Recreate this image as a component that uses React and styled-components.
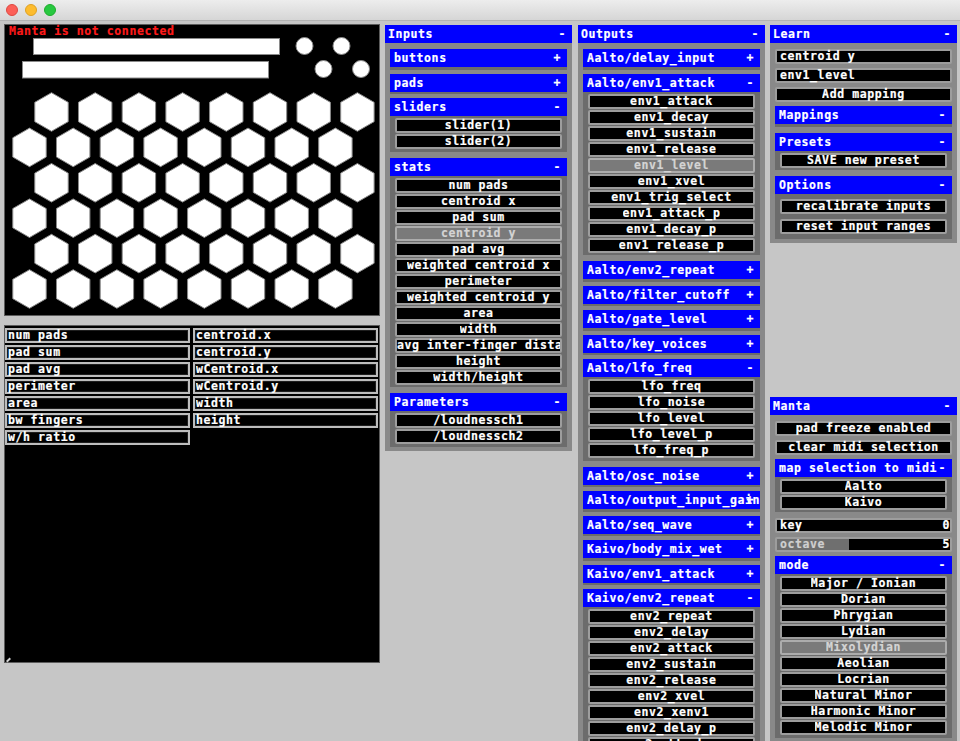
import React from 'react';
import styled, { createGlobalStyle } from 'styled-components';

const GlobalStyle = createGlobalStyle`
  html, body { margin: 0; padding: 0; background: #c6c6c6; overflow: hidden; }
  body { font-family: "DejaVu Sans Mono", "Liberation Mono", monospace; }
  #root { width: 960px; height: 741px; overflow: hidden; }
`;

const FONT = `font-family: "DejaVu Sans Mono", "Liberation Mono", monospace; font-weight: bold; font-size: 11.5px; letter-spacing: 0.6px; -webkit-text-stroke: 0.2px currentColor;`;

const Window = styled.div`
  width: 960px;
  height: 741px;
  display: flex;
  flex-direction: column;
  background: #c6c6c6;
  overflow: hidden;
`;

const TitleBar = styled.div`
  flex: none;
  height: 20px;
  background: linear-gradient(#ededed, #d6d6d6);
  border-bottom: 1px solid #b3b3b3;
  display: flex;
  align-items: center;
  gap: 7px;
  padding-left: 6px;
`;

const Light = styled.span`
  width: 12px;
  height: 12px;
  border-radius: 50%;
  box-sizing: border-box;
  background: ${(p) => p.$c};
  border: 0.5px solid ${(p) => p.$b};
`;

const Main = styled.div`
  flex: 1;
  display: flex;
  align-items: flex-start;
  gap: 5px;
  padding: 3px 0 0 4px;
  min-height: 0;
`;

const LeftCol = styled.div`
  width: 376px;
  flex: none;
  display: flex;
  flex-direction: column;
  gap: 9px;
`;

const MantaBox = styled.div`
  position: relative;
  height: 292px;
  box-sizing: border-box;
  background: #000;
  border: 1px solid #5c5c5c;
`;

const Status = styled.span`
  position: absolute;
  left: 4px;
  top: 0px;
  ${FONT}
  line-height: 13px;
  color: #ff1a1a;
`;

const StatsBox = styled.div`
  position: relative;
  height: 338px;
  box-sizing: border-box;
  background: #000;
  border: 1px solid #5c5c5c;
  display: grid;
  grid-template-columns: 185px 185px;
  grid-auto-rows: 15px;
  column-gap: 3px;
  row-gap: 2px;
  align-content: start;
  padding-top: 1.5px;
`;

const ResizeMark = styled.span`
  position: absolute;
  left: 1px;
  bottom: 1px;
  width: 5px;
  height: 2px;
  background: #d0d0d0;
  transform: rotate(-45deg);
`;

const StatCell = styled.div`
  box-sizing: border-box;
  border: 2px solid #bdbdbd;
  box-shadow: inset 0 0 0 1px #1e1e1e;
  background: #000;
  color: #fff;
  ${FONT}
  padding-left: 1px;
  white-space: nowrap;
`;

const Label = styled.span`
  display: block;
  height: 15px;
  margin: -2px 0;
  min-width: 0;
  max-width: 100%;
  line-height: 15px;
  overflow: hidden;
  white-space: nowrap;
`;

const Column = styled.div`
  width: 187px;
  flex: none;
  display: flex;
  flex-direction: column;
  margin-left: ${(p) => p.$shift || 0}px;
`;

const Panel = styled.div`
  background: #898989;
  margin-top: ${(p) => p.$top || 1}px;
  display: flex;
  flex-direction: column;
`;

const Header = styled.div`
  height: 18px;
  flex: none;
  background: #0000ff;
  color: #fff;
  ${FONT}
  line-height: 18px;
  display: grid;
  align-items: center;
  padding-left: ${(p) => (p.$sub ? 4 : 3)}px;
  overflow: hidden;
  & > * { grid-area: 1 / 1; white-space: nowrap; }
`;

const HeaderLabel = styled.span`
  overflow: hidden;
`;

const HeaderSign = styled.span`
  justify-self: end;
  margin-right: 6px;
`;

const PanelBody = styled.div`
  display: flex;
  flex-direction: column;
  padding: 6px 5px 4.5px;
`;

const SubPanel = styled.div`
  background: #6c6c6c;
  padding-bottom: 2.5px;
  margin-bottom: ${(p) => (p.$open ? 6 : 4)}px;
  &:last-child { margin-bottom: 0; }
`;

const SubBody = styled.div`
  display: flex;
  flex-direction: column;
  gap: ${(p) => (p.$loose ? 4.5 : 1)}px;
  padding: ${(p) => (p.$loose ? '5px 5px 2.5px' : '2px 5px 0')};
`;

const Item = styled.div`
  height: 15px;
  flex: none;
  box-sizing: border-box;
  border: 2px solid ${(p) => (p.$on ? '#acacac' : '#9d9d9d')};
  border-radius: 2px;
  background: ${(p) => (p.$on ? '#7a7a7a' : '#000')};
  color: ${(p) => (p.$on ? '#d4d4d4' : '#fff')};
  ${FONT}
  display: flex;
  justify-content: ${(p) => (p.$left ? 'flex-start' : 'safe center')};
  padding-left: ${(p) => (p.$left ? 3 : 0)}px;
  white-space: nowrap;
  margin-bottom: ${(p) => (p.$spaced ? 4 : 0)}px;
`;

const Slider = styled.div`
  position: relative;
  height: 15px;
  box-sizing: border-box;
  border: 2px solid #9d9d9d;
  border-radius: 2px;
  background: #000;
  margin-bottom: 4px;
`;

const SliderFill = styled.div`
  position: absolute;
  left: 0;
  top: 0;
  bottom: 0;
  background: #6f6f6f;
`;

const SliderText = styled.div`
  position: relative;
  display: flex;
  justify-content: space-between;
  height: 15px;
  margin: -2px 0;
  padding: 0 0 0 3px;
  ${FONT}
  line-height: 15px;
  color: #fff;
`;

const SliderName = styled.span`
  color: ${(p) => (p.$dim ? '#cfcfcf' : '#fff')};
`;

function PanelHead({ title, sign, sub }) {
  return (
    <Header $sub={sub}>
      <HeaderLabel>{title}</HeaderLabel>
      <HeaderSign>{sign}</HeaderSign>
    </Header>
  );
}

function Sub({ title, items, loose, open }) {
  const isOpen = open ?? !!items;
  return (
    <SubPanel $open={isOpen}>
      <PanelHead sub title={title} sign={isOpen ? '-' : '+'} />
      {items && items.length > 0 && (
        <SubBody $loose={loose}>
          {items.map((it) => {
            const [label, on] = Array.isArray(it) ? it : [it, false];
            return (
              <Item key={label} $on={on}>
                <Label>{label}</Label>
              </Item>
            );
          })}
        </SubBody>
      )}
    </SubPanel>
  );
}

function Hex({ cx, cy, r }) {
  const pts = [];
  for (let i = 0; i < 6; i++) {
    const a = ((-90 + 60 * i) * Math.PI) / 180;
    pts.push(`${(cx + r * Math.cos(a)).toFixed(2)},${(cy + r * Math.sin(a)).toFixed(2)}`);
  }
  return <polygon points={pts.join(' ')} fill="#fff" stroke="#8a8a8a" strokeWidth="1" />;
}

function MantaDrawing() {
  const hexes = [];
  for (let row = 0; row < 6; row++) {
    const offset = row % 2 === 0;
    const y = 87 + 35.4 * row;
    for (let c = 0; c < 8; c++) {
      const x = (offset ? 46.5 : 24.5) + 43.7 * c;
      hexes.push(<Hex key={`${row}-${c}`} cx={x} cy={y} r={19.3} />);
    }
  }
  return (
    <svg width="374" height="290" viewBox="0 0 374 290" style={{ display: 'block' }}>
      <rect x="28.5" y="13.5" width="246" height="16" fill="#fff" stroke="#8a8a8a" />
      <rect x="17.5" y="36.5" width="246" height="16.5" fill="#fff" stroke="#8a8a8a" />
      <circle cx="299.5" cy="21" r="8.5" fill="#fff" stroke="#8a8a8a" />
      <circle cx="336.5" cy="21" r="8.5" fill="#fff" stroke="#8a8a8a" />
      <circle cx="318.5" cy="44" r="8.5" fill="#fff" stroke="#8a8a8a" />
      <circle cx="356" cy="44" r="8.5" fill="#fff" stroke="#8a8a8a" />
      {hexes}
    </svg>
  );
}

const statRows = [
  ['num pads', 'centroid.x'],
  ['pad sum', 'centroid.y'],
  ['pad avg', 'wCentroid.x'],
  ['perimeter', 'wCentroid.y'],
  ['area', 'width'],
  ['bw fingers', 'height'],
  ['w/h ratio', null],
];

const modes = [
  'Major / Ionian',
  'Dorian',
  'Phrygian',
  'Lydian',
  ['Mixolydian', true],
  'Aeolian',
  'Locrian',
  'Natural Minor',
  'Harmonic Minor',
  'Melodic Minor',
];

export default function App() {
  return (
    <Window>
      <GlobalStyle />
      <TitleBar>
        <Light $c="#fc5f57" $b="#de4841" />
        <Light $c="#fdbc2e" $b="#dea123" />
        <Light $c="#28c840" $b="#1dad2b" />
      </TitleBar>
      <Main>
        <LeftCol>
          <MantaBox>
            <MantaDrawing />
            <Status>Manta is not connected</Status>
          </MantaBox>
          <StatsBox>
            {statRows.flatMap(([a, b]) => [
              <StatCell key={a}>
                <Label>{a}</Label>
              </StatCell>,
              b ? (
                <StatCell key={b}>
                  <Label>{b}</Label>
                </StatCell>
              ) : null,
            ])}
            <ResizeMark />
          </StatsBox>
        </LeftCol>

        <Column>
          <Panel>
            <PanelHead title="Inputs" sign="-" />
            <PanelBody>
              <Sub title="buttons" />
              <Sub title="pads" />
              <Sub title="sliders" items={['slider(1)', 'slider(2)']} />
              <Sub
                title="stats"
                items={[
                  'num pads',
                  'centroid x',
                  'pad sum',
                  ['centroid y', true],
                  'pad avg',
                  'weighted centroid x',
                  'perimeter',
                  'weighted centroid y',
                  'area',
                  'width',
                  'avg inter-finger distance',
                  'height',
                  'width/height',
                ]}
              />
              <Sub title="Parameters" items={['/loudnessch1', '/loudnessch2']} />
            </PanelBody>
          </Panel>
        </Column>

        <Column $shift={1}>
          <Panel>
            <PanelHead title="Outputs" sign="-" />
            <PanelBody>
              <Sub title="Aalto/delay_input" />
              <Sub
                title="Aalto/env1_attack"
                items={[
                  'env1_attack',
                  'env1_decay',
                  'env1_sustain',
                  'env1_release',
                  ['env1_level', true],
                  'env1_xvel',
                  'env1_trig_select',
                  'env1_attack_p',
                  'env1_decay_p',
                  'env1_release_p',
                ]}
              />
              <Sub title="Aalto/env2_repeat" />
              <Sub title="Aalto/filter_cutoff" />
              <Sub title="Aalto/gate_level" />
              <Sub title="Aalto/key_voices" />
              <Sub
                title="Aalto/lfo_freq"
                items={['lfo_freq', 'lfo_noise', 'lfo_level', 'lfo_level_p', 'lfo_freq_p']}
              />
              <Sub title="Aalto/osc_noise" />
              <Sub title="Aalto/output_input_gain" />
              <Sub title="Aalto/seq_wave" />
              <Sub title="Kaivo/body_mix_wet" />
              <Sub title="Kaivo/env1_attack" />
              <Sub
                title="Kaivo/env2_repeat"
                items={[
                  'env2_repeat',
                  'env2_delay',
                  'env2_attack',
                  'env2_sustain',
                  'env2_release',
                  'env2_xvel',
                  'env2_xenv1',
                  'env2_delay_p',
                  'env2_attack_p',
                  'env2_release_p',
                ]}
              />
            </PanelBody>
          </Panel>
        </Column>

        <Column>
          <Panel>
            <PanelHead title="Learn" sign="-" />
            <PanelBody>
              <Item $left $spaced>
                <Label>centroid y</Label>
              </Item>
              <Item $left $spaced>
                <Label>env1_level</Label>
              </Item>
              <Item $spaced>
                <Label>Add mapping</Label>
              </Item>
              <Sub title="Mappings" open />
              <Sub title="Presets" items={['SAVE new preset']} />
              <Sub title="Options" loose items={['recalibrate inputs', 'reset input ranges']} />
            </PanelBody>
          </Panel>

          <Panel $top={153.5}>
            <PanelHead title="Manta" sign="-" />
            <PanelBody>
              <Item $spaced>
                <Label>pad freeze enabled</Label>
              </Item>
              <Item $spaced>
                <Label>clear midi selection</Label>
              </Item>
              <Sub title="map selection to midi" items={['Aalto', 'Kaivo']} />
              <Slider>
                <SliderText>
                  <SliderName>key</SliderName>
                  <span>0</span>
                </SliderText>
              </Slider>
              <Slider>
                <SliderFill style={{ width: `${(5 / 12) * 100}%` }} />
                <SliderText>
                  <SliderName $dim>octave</SliderName>
                  <span>5</span>
                </SliderText>
              </Slider>
              <Sub title="mode" items={modes} />
            </PanelBody>
          </Panel>
        </Column>
      </Main>
    </Window>
  );
}
